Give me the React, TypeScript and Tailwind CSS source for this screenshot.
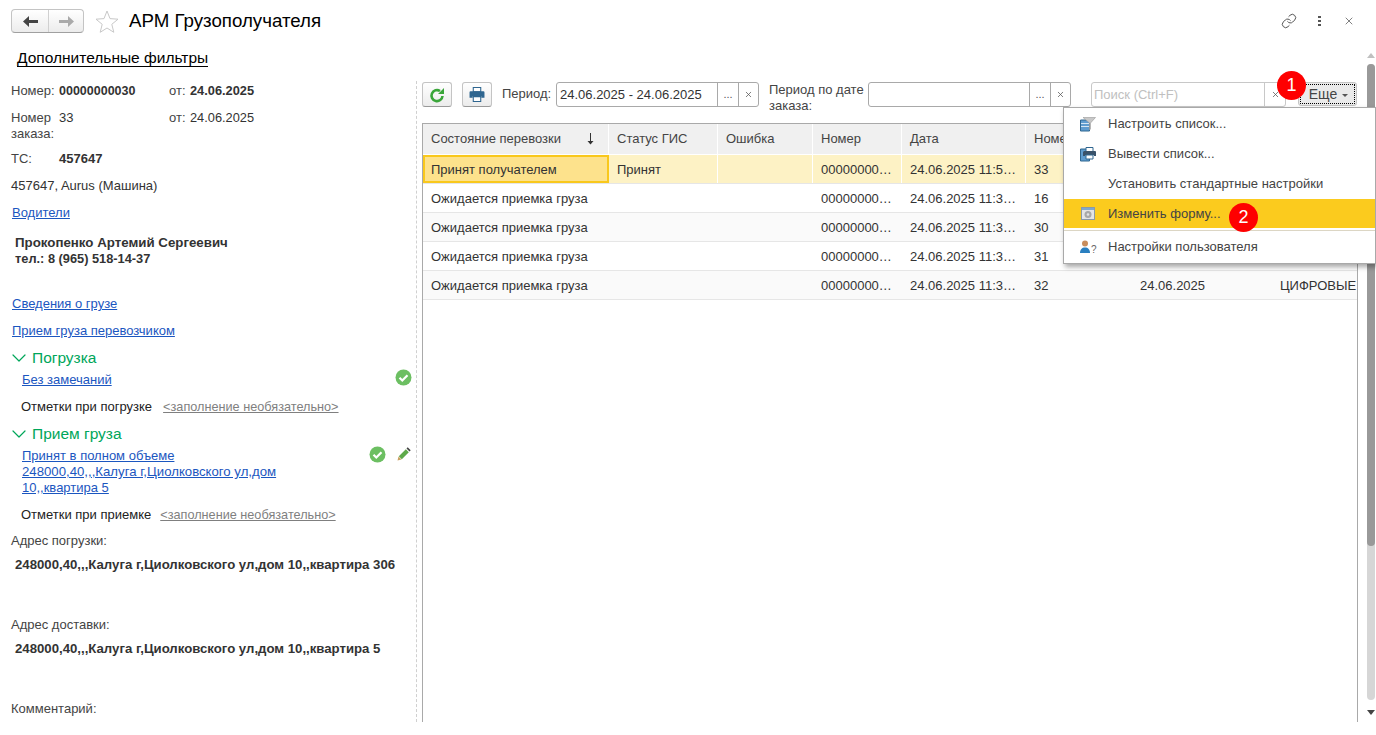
import { ChevronDown, Link, X } from "lucide-react";

const columns = [
  { title: "Состояние перевозки", width: "w-[186px]" },
  { title: "Статус ГИС", width: "w-[109px]" },
  { title: "Ошибка", width: "w-[95px]" },
  { title: "Номер", width: "w-[89px]" },
  { title: "Дата", width: "w-[124px]" },
  { title: "Номер заказа", width: "w-[106px]" },
  { title: "", width: "w-[140px]" },
  { title: "", width: "flex-1" },
];

// the last two columns sit under the open menu, only the bottom row shows
const rows = [
  ["Принят получателем", "Принят", "", "00000000…", "24.06.2025 11:5…", "33", "", ""],
  ["Ожидается приемка груза", "", "", "00000000…", "24.06.2025 11:3…", "16", "", ""],
  ["Ожидается приемка груза", "", "", "00000000…", "24.06.2025 11:3…", "30", "", ""],
  ["Ожидается приемка груза", "", "", "00000000…", "24.06.2025 11:3…", "31", "", ""],
  ["Ожидается приемка груза", "", "", "00000000…", "24.06.2025 11:3…", "32", "24.06.2025", "ЦИФРОВЫЕ"],
];

function CheckBadge() {
  return (
    <svg width="17" height="17" viewBox="0 0 17 17">
      <circle cx="8.5" cy="8.500" r="8" fill="#6cbf62" />
      <path d="M4.500 8.800l2.800 2.700 5.200-5.200" fill="none" stroke="#fff" strokeWidth="2.200" />
    </svg>
  );
}

function Pencil() {
  return (
    <svg width="14" height="14" viewBox="0 0 14 14">
      <path d="M0.500 13.500l1-4 3 3z" fill="#c9a060" />
      <path d="M1.800 9.200l7-7 3 3-7 7z" fill="#5ea94a" />
      <path d="M9.500 1.500l1.200-1.200 3 3-1.200 1.200z" fill="#444" />
    </svg>
  );
}

function Section({ title }: { title: string }) {
  return (
    <div className="flex h-[20px] items-center pl-[7px] text-[15.500px] text-[#00a65a]">
      <ChevronDown size={24} strokeWidth={1.2} className="mr-[1px] text-[#00a65a]" />
      {title}
    </div>
  );
}

function FieldButtons() {
  return (
    <>
      <div className="flex w-[21px] items-end justify-center border-l border-[#a9a9a9] pb-[6px] text-[11px] leading-none text-[#555]">...</div>
      <div className="flex w-[20px] items-center justify-center border-l border-[#a9a9a9]">
        <X size={9} strokeWidth={2} className="text-[#555]" />
      </div>
    </>
  );
}

function LeftPanel() {
  return (
    <div className="w-[416px] shrink-0 text-[13px] leading-[16px] text-[#333]">
      <div className="flex h-[34px] items-start pl-[17px] text-[15.500px] leading-[17px] text-black">
        <span className="border-b border-black">Дополнительные фильтры</span>
      </div>
      <div className="flex h-[27px] pl-[11px]">
        <span className="w-[48px] text-[#444]">Номер:</span>
        <span className="w-[110px] text-[12.500px] font-bold">00000000030</span>
        <span className="w-[21px] text-[#444]">от:</span>
        <span className="text-[12.800px] font-bold">24.06.2025</span>
      </div>
      <div className="flex h-[41px] pl-[11px]">
        <span className="w-[48px] text-[#444]">Номер заказа:</span>
        <span className="w-[110px]">33</span>
        <span className="w-[21px] text-[#444]">от:</span>
        <span className="text-[12.800px]">24.06.2025</span>
      </div>
      <div className="flex h-[27px] pl-[11px]">
        <span className="w-[48px] text-[#444]">ТС:</span>
        <span className="font-bold">457647</span>
      </div>
      <div className="h-[27px] pl-[11px]">457647, Aurus (Машина)</div>
      <div className="h-[30px] pl-[12px] text-[#1b56c0] underline">Водители</div>
      <div className="h-[61px] pl-[15px] text-[13.300px] font-bold">
        <div>Прокопенко Артемий Сергеевич</div>
        <div className="text-[12.800px]">тел.: 8 (965) 518-14-37</div>
      </div>
      <div className="h-[27px] pl-[12px] text-[#1b56c0] underline">Сведения о грузе</div>
      <div className="h-[25px] pl-[12px] text-[#1b56c0] underline">Прием груза перевозчиком</div>
      <Section title="Погрузка" />
      <div className="flex h-[31px] pl-[22px] pr-[4px] pt-[4px]">
        <span className="flex-1 text-[#1b56c0] underline">Без замечаний</span>
        <span className="-mt-[3px]"><CheckBadge /></span>
      </div>
      <div className="flex h-[25px] pl-[21px]">
        <span className="mr-[11px] text-[#222]">Отметки при погрузке</span>
        <span className="text-[12.700px] text-[#7f7f7f] underline">&lt;заполнение необязательно&gt;</span>
      </div>
      <Section title="Прием груза" />
      <div className="flex h-[63px] pl-[22px] pr-[5px] pt-[4px]">
        <span className="w-[300px] text-[#1b56c0] underline">
          Принят в полном объеме<br />
          <span className="text-[13.200px]">248000,40,,,Калуга г,Циолковского ул,дом</span><br />
          10,,квартира 5
        </span>
        <span className="ml-[47px] -mt-[2px] flex gap-[11px]">
          <CheckBadge />
          <span className="pt-[1px]"><Pencil /></span>
        </span>
      </div>
      <div className="flex h-[26px] pl-[21px]">
        <span className="mr-[9px] text-[#222]">Отметки при приемке</span>
        <span className="text-[12.700px] text-[#7f7f7f] underline">&lt;заполнение необязательно&gt;</span>
      </div>
      <div className="h-[24px] pl-[11px] text-[#444]">Адрес погрузки:</div>
      <div className="h-[60px] whitespace-nowrap pl-[15px] text-[13.200px] font-bold">248000,40,,,Калуга г,Циолковского ул,дом 10,,квартира 306</div>
      <div className="h-[24px] pl-[11px] text-[#444]">Адрес доставки:</div>
      <div className="h-[60px] whitespace-nowrap pl-[15px] text-[13.200px] font-bold">248000,40,,,Калуга г,Циолковского ул,дом 10,,квартира 5</div>
      <div className="pl-[11px] text-[#444]">Комментарий:</div>
    </div>
  );
}

function Toolbar() {
  return (
    <div className="flex h-[42px] items-start pt-[1px] text-[13px] leading-[16px] text-[#444]">
      <button className="flex h-[25px] w-[30px] items-center justify-center rounded-[3px] border border-[#c4c4c4] border-b-[#999] bg-gradient-to-b from-white to-[#ececec]">
        <svg width="16" height="16" viewBox="0 0 16 16">
          <path d="M13.500 9A5.500 5.500 0 1 1 11 4" fill="none" stroke="#3aa63a" strokeWidth="2.600" />
          <path d="M9 7h6V1z" fill="#3aa63a" />
        </svg>
      </button>
      <button className="ml-[10px] flex h-[25px] w-[30px] items-center justify-center rounded-[3px] border border-[#c4c4c4] border-b-[#999] bg-gradient-to-b from-white to-[#ececec]">
        <svg width="16" height="15" viewBox="0 0 15 14">
          <path d="M4 0.500h7v4H4z" fill="#fff" stroke="#2f6690" />
          <path d="M1.500 4h12a1 1 0 0 1 1 1v5h-3v-1.500h-8V10H.5V5a1 1 0 0 1 1-1z" fill="#2f6690" />
          <path d="M4 9h7v4.500H4z" fill="#fff" stroke="#2f6690" />
        </svg>
      </button>
      <span className="ml-[10px] mt-[4px] w-[54px]">Период:</span>
      <div className="flex h-[25px] w-[203px] rounded-[3px] border border-[#a9a9a9] text-[#333]">
        <span className="flex-1 whitespace-nowrap pl-[3px] pt-[4px]">24.06.2025 - 24.06.2025</span>
        <FieldButtons />
      </div>
      <span className="ml-[10px] w-[99px]">Период по дате заказа:</span>
      <div className="flex h-[25px] w-[203px] rounded-[3px] border border-[#a9a9a9]">
        <span className="flex-1" />
        <FieldButtons />
      </div>
      <div className="ml-[20px] flex h-[25px] w-[195px] rounded-[3px] border border-[#c8c8c8]">
        <span className="flex-1 pl-[2px] pt-[4px] text-[#c0c0c0]">Поиск (Ctrl+F)</span>
        <div className="flex w-[21px] items-center justify-center border-l border-[#c8c8c8]">
          <X size={9} strokeWidth={2} className="text-[#555]" />
        </div>
      </div>
      <button className="ml-[12px] flex h-[24px] w-[59px] items-center justify-center gap-[5px] rounded-[3px] border border-[#c4c4c4] bg-[#eaeaea] pl-[2px] text-[14px] text-[#444] outline-1 -outline-offset-3 outline-dotted outline-black">
        Еще
        <span className="mt-[2px] h-0 w-0 border-x-[3px] border-t-[3px] border-x-transparent border-t-[#555]" />
      </button>
    </div>
  );
}

function DataTable() {
  return (
    <div className="min-h-0 flex-1 overflow-hidden border border-b-0 border-[#a9a9a9] text-[13px] text-[#333]">
      <div className="flex h-[31px] border-b border-white">
        {columns.map((col, i) => (
          <div
            key={i}
            className={`${col.width} relative flex shrink-0 items-center overflow-hidden whitespace-nowrap border-r border-white bg-[#f0f0f0] pl-[8px] text-[#444]`}
          >
            {col.title}
            {i === 0 && (
              <svg className="absolute right-[14px]" width="7" height="12" viewBox="0 0 7 12">
                <path d="M3.500 0v10" stroke="#333" />
                <path d="M0.500 8h6l-3 3.500z" fill="#333" />
              </svg>
            )}
          </div>
        ))}
      </div>
      {rows.map((row, r) => (
        <div key={r} className={`flex h-[29px] border-b border-[#e6e6e6] ${r === 0 ? "bg-[#fdf2c5]" : r % 2 === 0 ? "bg-[#fafafa]" : "bg-white"}`}>
          {row.map((cell, c) => {
            const selected = r === 0 && c === 0;
            return (
              <div
                key={c}
                className={`${columns[c].width} flex shrink-0 items-center overflow-hidden whitespace-nowrap pt-[1px] ${
                  selected
                    ? "border-2 border-[#f9c81c] bg-[#fde28c] pl-[6px]"
                    : r === 0
                      ? "border-r border-white pl-[8px]"
                      : "pl-[8px]"
                }`}
              >
                {cell}
              </div>
            );
          })}
        </div>
      ))}
    </div>
  );
}

function ScrollBar() {
  return (
    <div className="flex w-[18px] shrink-0 flex-col items-center pl-[8px] pt-[4px]">
      <span className="h-0 w-0 border-x-[4px] border-b-[5px] border-x-transparent border-b-[#c0c0c0]" />
      <div className="mt-[6px] w-[8px] flex-1 rounded-[4px] bg-[#d6d6d6]">
        <div className="h-[482px] rounded-[4px] bg-[#999]" />
      </div>
      <span className="mb-[20px] mt-[10px] h-0 w-0 border-x-[4px] border-t-[5px] border-x-transparent border-t-[#444]" />
    </div>
  );
}

function MoreMenu() {
  return (
    <div className="absolute left-[1063px] right-0 top-[107px] h-[157px] border border-[#a9a9a9] bg-white pt-[1px] text-[13px] text-[#444] shadow-[2px_3px_5px_rgba(0,0,0,0.35)]">
      <div className="flex h-[30px] items-center">
        <svg className="ml-[16px] mr-[12px]" width="16" height="15" viewBox="0 0 16 15">
          <path d="M0.500 3h9v11h-9z" fill="#5f9ccf" stroke="#2f6690" />
          <path d="M1 6.500h8M1 9.500h8" stroke="#d5e6f3" />
          <path d="M3 .5h12.500L10.500 6v6l-1 1V6z" fill="#c8c8c8" stroke="#999" strokeWidth=".6" />
        </svg>
        Настроить список...
      </div>
      <div className="flex h-[30px] items-center">
        <svg className="ml-[16px] mr-[12px]" width="16" height="15" viewBox="0 0 16 15">
          <path d="M0.500 2h9v12h-9z" fill="#5f9ccf" stroke="#2f6690" />
          <path d="M6 .5h7v4H6z" fill="#fff" stroke="#2f6690" />
          <path d="M4 4h11a1 1 0 0 1 1 1v4h-2v-1H5v1H3V5z" fill="#39526a" />
          <path d="M6 8h7v4H6z" fill="#fff" stroke="#2f6690" />
        </svg>
        Вывести список...
      </div>
      <div className="flex h-[30px] items-center pl-[44px]">Установить стандартные настройки</div>
      <div className="flex h-[29px] items-center bg-[#fbcb1e]">
        <svg className="ml-[17px] mr-[13px]" width="14" height="13" viewBox="0 0 14 13">
          <rect x=".5" y=".5" width="13" height="12" fill="#e4e4e4" stroke="#8a9aa8" />
          <path d="M1 1h12v2H1z" fill="#7fa8cc" />
          <circle cx="7" cy="7.500" r="3.500" fill="#a8a8a8" />
          <circle cx="7" cy="7.500" r="1.300" fill="#e4e4e4" />
        </svg>
        Изменить форму...
      </div>
      <div className="mt-[2px] h-px bg-[#dcd6c4]" />
      <div className="flex h-[31px] items-center pt-[1px]">
        <svg className="ml-[16px]" width="11" height="14" viewBox="0 0 11 14">
          <circle cx="5" cy="3.500" r="3" fill="#c98d5c" />
          <path d="M0 13c0-3.500 2-5.500 5-5.500s5 2 5 5.500z" fill="#2a7fc0" />
        </svg>
        <span className="mr-[11px] mt-[5px] w-[6px] text-[10px] leading-none text-[#666]">?</span>
        Настройки пользователя
      </div>
    </div>
  );
}

function NumberBadge({ n, className }: { n: number; className: string }) {
  return (
    <div className={`absolute flex h-[29px] w-[29px] items-center justify-center rounded-full bg-[#fe0000] text-[18px] text-white ${className}`}>
      {n}
    </div>
  );
}

export default function App() {
  return (
    <div className="relative flex h-[735px] w-[1376px] flex-col overflow-hidden bg-white font-['Liberation_Sans',Arial,sans-serif]">
      <header className="flex h-[42px] shrink-0 items-center pl-[11px] pr-[21px]">
        <div className="flex h-[24px] w-[73px] rounded-[4px] border border-[#c4c4c4] border-b-[#a0a0a0] bg-gradient-to-b from-white to-[#ececec]">
          <div className="flex w-[37px] items-center justify-center border-r border-[#d0d0d0]">
            <svg width="15" height="11" viewBox="0 0 15 11"><path d="M0 5.500L6 0v4h9v3H6v4z" fill="#444" /></svg>
          </div>
          <div className="flex flex-1 items-center justify-center">
            <svg width="15" height="11" viewBox="0 0 15 11"><path d="M15 5.500L9 0v4H0v3h9v4z" fill="#aaa" /></svg>
          </div>
        </div>
        <svg className="ml-[11px]" width="24" height="23" viewBox="0 0 24 23">
          <path d="M12 1l3 7.600 8 .6-6.200 5.100 2 8-6.800-4.300-6.800 4.300 2-8L1 9.200l8-.6z" fill="none" stroke="#c8c8c8" />
        </svg>
        <h1 className="ml-[10px] flex-1 text-[18.700px] font-normal text-black">АРМ Грузополучателя</h1>
        <Link size={16} strokeWidth={1.5} className="text-[#555]" />
        <div className="ml-[21px] flex flex-col gap-[2px]">
          <span className="h-[2px] w-[3px] bg-[#555]" />
          <span className="h-[2px] w-[3px] bg-[#555]" />
          <span className="h-[2px] w-[3px] bg-[#555]" />
        </div>
        <X size={12} strokeWidth={1.5} className="ml-[22px] text-[#555]" />
      </header>
      <div className="flex min-h-0 flex-1 pt-[7px]">
        <LeftPanel />
        <div className="mb-[13px] mt-[32px] shrink-0 border-l border-dashed border-[#d0d0d0]" />
        <div className="flex min-w-0 flex-1 flex-col pb-[13px] pl-[5px] pt-[32px]">
          <Toolbar />
          <DataTable />
        </div>
        <ScrollBar />
      </div>
      <MoreMenu />
      <NumberBadge n={1} className="left-[1277px] top-[71px]" />
      <NumberBadge n={2} className="left-[1229px] top-[203px]" />
    </div>
  );
}
